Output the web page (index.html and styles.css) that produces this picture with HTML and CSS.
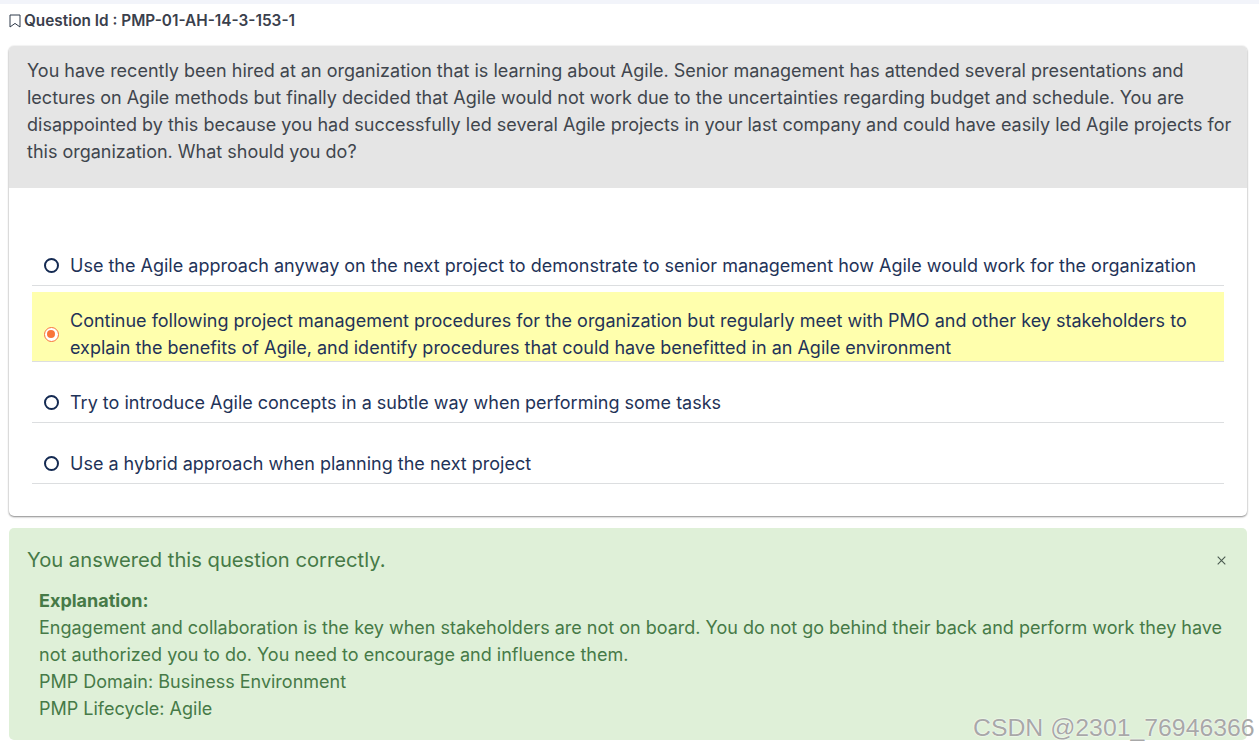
FILE: index.html
```html
<!DOCTYPE html>
<html lang="en">
<head>
<meta charset="utf-8">
<title>Question</title>
<link rel="stylesheet" href="styles.css">
</head>
<body>
<div class="topstrip"></div>
<main class="page">
  <div class="qid">
    <svg class="bookmark" width="12" height="14" viewBox="0 0 12 14"><path d="M1 1h10v12L6 9.4 1 13z" fill="none" stroke="#2f3a4a" stroke-width="1"/></svg>
    <span>Question Id : PMP-01-AH-14-3-153-1</span>
  </div>
  <section class="card">
    <div class="question">You have recently been hired at an organization that is learning about Agile. Senior management has attended several presentations and lectures on Agile methods but finally decided that Agile would not work due to the uncertainties regarding budget and schedule. You are disappointed by this because you had successfully led several Agile projects in your last company and could have easily led Agile projects for this organization. What should you do?</div>
    <ul class="options">
      <li class="option"><span class="radio"></span><span>Use the Agile approach anyway on the next project to demonstrate to senior management how Agile would work for the organization</span></li>
      <li class="option selected"><span class="radio on"></span><span>Continue following project management procedures for the organization but regularly meet with PMO and other key stakeholders to explain the benefits of Agile, and identify procedures that could have benefitted in an Agile environment</span></li>
      <li class="option"><span class="radio"></span><span>Try to introduce Agile concepts in a subtle way when performing some tasks</span></li>
      <li class="option"><span class="radio"></span><span>Use a hybrid approach when planning the next project</span></li>
    </ul>
  </section>
  <section class="alert">
    <div class="alert-head">
      <h4>You answered this question correctly.</h4>
      <svg class="close" width="9" height="9" viewBox="0 0 9 9"><path d="M.7.7l7.6 7.6M8.3.7L.7 8.3" stroke="#4a5a50" stroke-width="1.1" fill="none"/></svg>
    </div>
    <div class="explain">
      <strong>Explanation:</strong><br>
      Engagement and collaboration is the key when stakeholders are not on board. You do not go behind their back and perform work they have not authorized you to do. You need to encourage and influence them.<br>
      PMP Domain: Business Environment<br>
      PMP Lifecycle: Agile
    </div>
  </section>
</main>
<div class="watermark">CSDN @2301_76946366</div>
</body>
</html>
```
FILE: styles.css
```css
* { box-sizing: border-box; }
html, body { margin: 0; padding: 0; height: 750px; overflow: hidden; background: #fff; }
body { font-family: Inter, "Liberation Sans", sans-serif; font-size: 18px; line-height: 27px; color: #40454d; position: relative; }
.topstrip { height: 4px; background: #f2f4fa; }
.page { padding: 0 12px 0 9px; }
.qid { height: 42px; display: flex; align-items: center; gap: 3px; font-size: 15.35px; font-weight: 600; line-height: 20px; color: #3a404c; padding-bottom: 9px; }
.bookmark { flex: none; margin-top: 1px; }
.card { height: 470px; border-radius: 5px; background: #fff; box-shadow: 0 1px 2px rgba(0,0,0,.45), 0 0 2px rgba(0,0,0,.1); overflow: hidden; }
.question { height: 142px; padding: 11px 10px 11px 18px; margin: 0; background: #e5e5e5; color: #40454d; }
.options { list-style: none; margin: 0; padding: 60px 23px 0; color: #1f3358; }
.option { display: flex; align-items: center; gap: 11px; padding: 4px 0 6px 12px; border-bottom: 1px solid #dcdee0; margin-bottom: 6px; }
.option.selected { background: #ffffad; padding: 15px 0 0 12px; margin-bottom: 23px; }
.option:nth-child(3) { margin-bottom: 23px; }
.radio { flex: none; width: 15px; height: 15px; border-radius: 50%; border: 2px solid #142a52; background: #fff; margin-left: -.5px; margin-right: .5px; }
.radio.on { border: 1.5px solid #f9743a; background: #fff; position: relative; }
.radio.on::after { content: ""; position: absolute; left: 2px; top: 2px; width: 8px; height: 8px; border-radius: 50%; background: #f9743a; }
.alert { margin-top: 12px; height: 212px; background: #dff0d8; border-radius: 5px; color: #467a47; padding: 17px 19px 0; }
.alert-head { display: flex; justify-content: space-between; align-items: center; }
.alert-head h4 { margin: 0 0 0 -1px; font-size: 20.2px; font-weight: 400; line-height: 30px; color: #467a47; }
.close { margin-right: 2px; }
.explain { padding: 12px 0 0 11px; }
.explain strong { font-weight: 700; }
.watermark { position: absolute; left: 973px; top: 713px; font-family: "Liberation Sans", sans-serif; font-size: 24.8px; line-height: 30px; color: #a8a8a8; text-shadow: 0 0 1px #fff, 0 0 2px #fff; white-space: nowrap; }
```
